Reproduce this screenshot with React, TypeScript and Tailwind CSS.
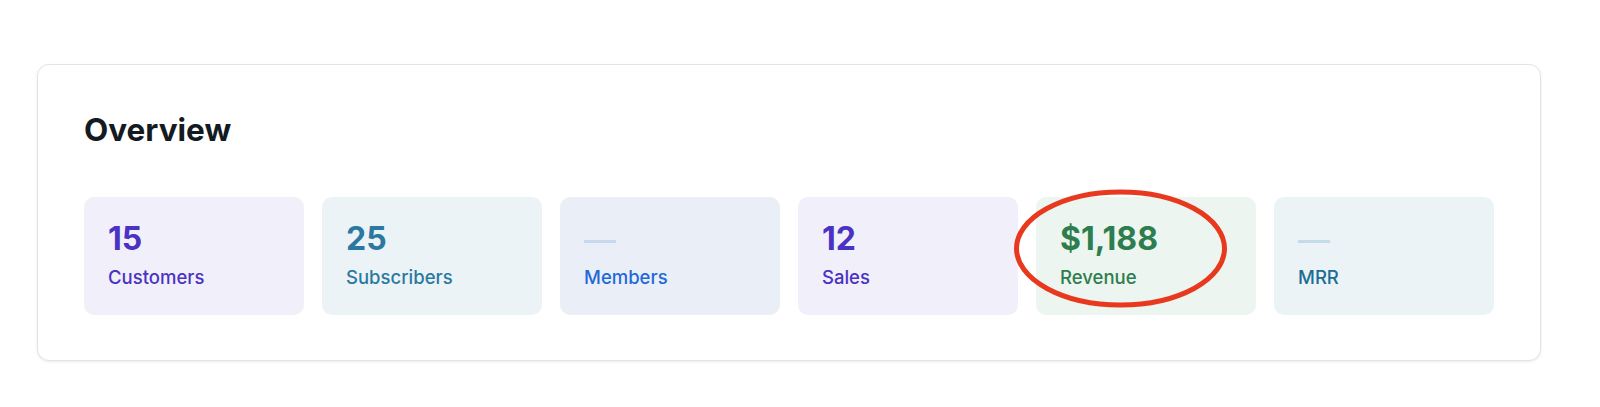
import React from "react";

type Stat = {
  label: string;
  value?: string;
  bg: string;
  text: string;
  dash: string;
};

const stats: Stat[] = [
  { label: "Customers", value: "15", bg: "bg-[#f1f0fa]", text: "text-[#4a33c2]", dash: "bg-[#d6d1f2]" },
  { label: "Subscribers", value: "25", bg: "bg-[#ebf3f7]", text: "text-[#2b79a0]", dash: "bg-[#c2dce8]" },
  { label: "Members", bg: "bg-[#eaeff7]", text: "text-[#1f69d9]", dash: "bg-[#c8d8ef]" },
  { label: "Sales", value: "12", bg: "bg-[#f1f0fa]", text: "text-[#4a33c2]", dash: "bg-[#d6d1f2]" },
  { label: "Revenue", value: "$1,188", bg: "bg-[#ecf5ef]", text: "text-[#2e7d4f]", dash: "bg-[#c6e2cf]" },
  { label: "MRR", bg: "bg-[#ebf3f6]", text: "text-[#1c6d93]", dash: "bg-[#c2dce8]" },
];

function StatTile({ stat }: { stat: Stat }) {
  return (
    <div className={`${stat.bg} rounded-[10px] px-6 pt-6 pb-[26px]`}>
      {stat.value ? (
        <div className={`${stat.text} text-[32px] leading-9 font-bold`}>{stat.value}</div>
      ) : (
        <div className="h-9 pt-[19px]">
          <div className={`${stat.dash} h-[3px] w-8`} />
        </div>
      )}
      <div className={`${stat.text} mt-2 text-[18.5px] leading-6 font-medium`}>{stat.label}</div>
    </div>
  );
}

export default function App() {
  return (
    <div className="relative min-h-[407px] bg-white pt-16 pl-[37px] font-['Inter',sans-serif]">
      <div className="w-[1504px] rounded-xl border border-[#e3e3e6] bg-white px-[46px] pt-[45px] pb-[45px] shadow-[0_1px_3px_rgba(0,0,0,0.08)]">
        <h2 className="text-[31.5px] leading-10 font-bold text-[#141a22]">Overview</h2>
        <div className="mt-[47px] grid grid-cols-6 gap-[18px]">
          {stats.map(s => (
            <StatTile key={s.label} stat={s} />
          ))}
        </div>
      </div>

      {/* annotation circle over Revenue */}
      <svg className="pointer-events-none absolute left-[1010px] top-[186px]" width="222" height="126" viewBox="0 0 222 126">
        <ellipse cx="110.5" cy="62.5" rx="104" ry="56.5" fill="none" stroke="#e8391f" strokeWidth="5" />
      </svg>
    </div>
  );
}
